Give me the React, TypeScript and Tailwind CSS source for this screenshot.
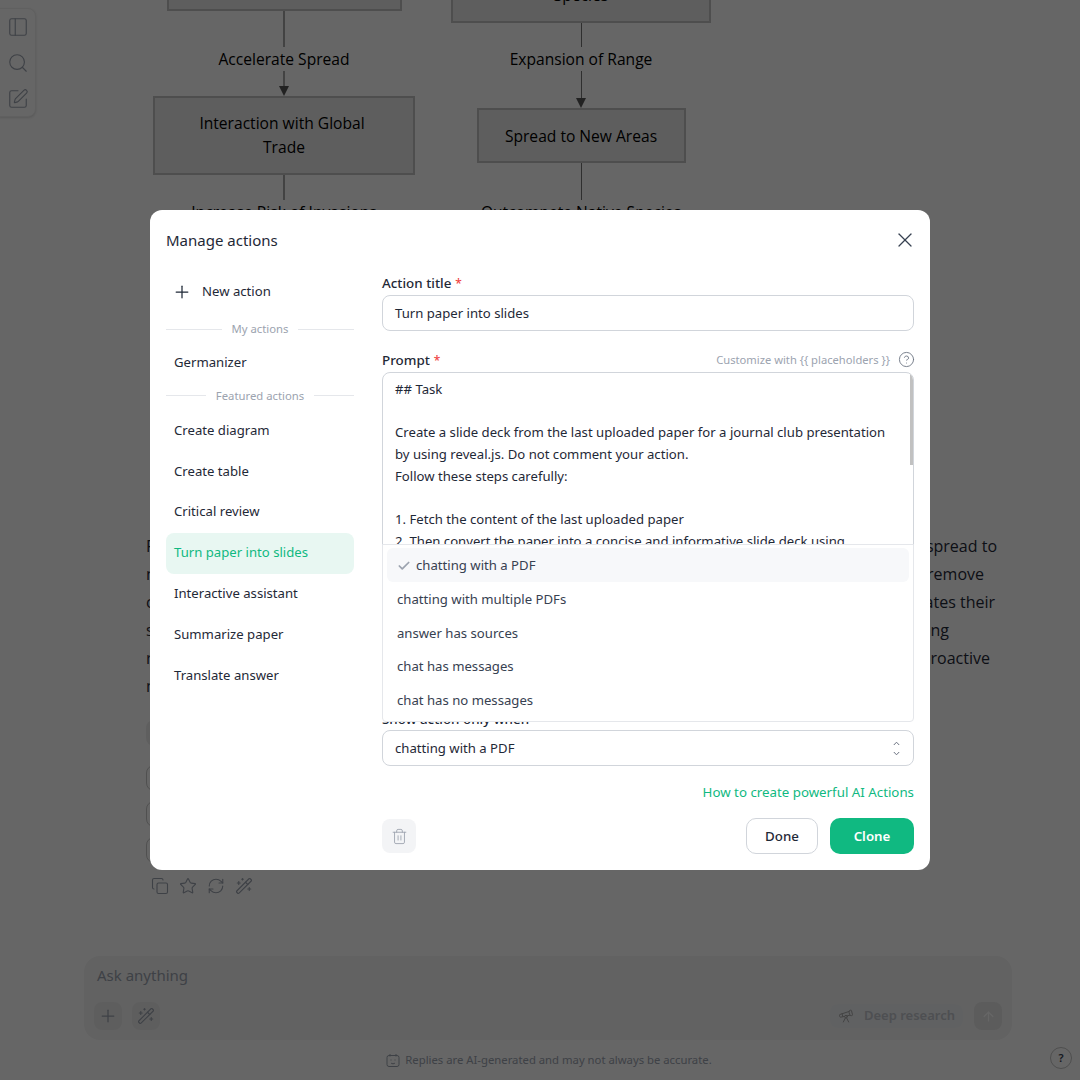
import { ArrowUp, Check, CircleHelp, Copy, PanelLeft, Plus, RefreshCw, Search, SquarePen, Star, Telescope, Trash2, WandSparkles, X } from "lucide-react";

const font = "[font-family:'Noto_Sans',sans-serif]";

function LeftLink({ h }: { h: string }) {
  return <div className={`w-[2px] bg-[#a8a8a8] ${h}`} />;
}

function RightLink({ h }: { h: string }) {
  return <div className={`w-px bg-[#777777] ${h}`} />;
}

function Arrow() {
  return <div className="h-0 w-0 border-x-[5px] border-t-[10px] border-x-transparent border-t-[#555]" />;
}

function DiagramLabel({ children }: { children: string }) {
  return <div className="flex h-[24px] items-center whitespace-nowrap text-[15.6px] leading-[24px] text-black">{children}</div>;
}

function Diagram() {
  return (
    <div className="flex h-[532px] items-start gap-[36px] overflow-hidden pl-[153px] [font-family:'Open_Sans',sans-serif]">
      <div className="flex w-[262px] flex-col items-center">
        <div className="h-[11px] w-[235px] border-x-2 border-b-2 border-[#c4c4c4] bg-[#ececec]" />
        <LeftLink h="h-[36px]" />
        <DiagramLabel>Accelerate Spread</DiagramLabel>
        <LeftLink h="h-[15px]" />
        <Arrow />
        <div className="flex h-[79px] w-[262px] flex-col items-center justify-center border-2 border-[#c4c4c4] bg-[#ececec] pb-[2px] text-[15.6px] leading-[24px] text-black">
          <span className="mr-[4px]">Interaction with Global</span>
          <span>Trade</span>
        </div>
        <LeftLink h="h-[25px]" />
        <DiagramLabel>Increase Risk of Invasions</DiagramLabel>
      </div>
      <div className="flex w-[260px] flex-col items-center">
        <div className="flex h-[23px] w-[260px] items-end justify-center border-x-2 border-b-2 border-[#c4c4c4] bg-[#ececec] text-[15.6px] leading-[24px] text-black">
          <span className="mb-[14px]">Species</span>
        </div>
        <RightLink h="h-[24px]" />
        <DiagramLabel>Expansion of Range</DiagramLabel>
        <RightLink h="h-[27px]" />
        <Arrow />
        <div className="flex h-[55px] w-[209px] items-center justify-center border-2 border-[#c4c4c4] bg-[#ececec] text-[15.6px] leading-[24px] text-black">
          Spread to New Areas
        </div>
        <RightLink h="h-[37px]" />
        <DiagramLabel>Outcompete Native Species</DiagramLabel>
      </div>
    </div>
  );
}

const para: [string, string, string][] = [
  ["Preventing invasive species", "to stop the spread to", "mr-[83px]"],
  ["native habitats and", "efforts to remove", "mr-[96px]"],
  ["control and monitor", "that regulates their", "mr-[85px]"],
  ["spread across regions", "by sharing", "mr-[131px]"],
  ["restoration work and", "and more proactive", "mr-[90px]"],
  ["management strategies.", "", "mr-0"],
];

function Paragraph() {
  return (
    <div className="w-full pl-[146px] text-[16px] leading-[28px] text-[#1f2937] [font-family:'Open_Sans',sans-serif]">
      {para.map(([l, r, m]) => (
        <div key={l} className="flex h-[28px] justify-between">
          <span>{l}</span>
          <span className={m}>{r}</span>
        </div>
      ))}
    </div>
  );
}

function Chips() {
  return (
    <div className="flex flex-col items-start pl-[146px] pt-[20px] text-[14px]">
      <div className="h-[26px] w-[200px] rounded-[8px] bg-[#eeeeee]" />
      <div className="mt-[19px] h-[26px] w-[200px] rounded-[8px] border border-[#c9c9c9]" />
      <div className="mt-[10px] h-[26px] w-[200px] rounded-[8px] border border-[#c9c9c9]" />
      <div className="mt-[10px] h-[26px] w-[200px] rounded-[8px] border border-[#c9c9c9]" />
    </div>
  );
}

function ActionIcons() {
  return (
    <div className="mt-[14px] flex gap-[10px] pl-[151px] text-[#9ca3af]">
      <Copy size={18} strokeWidth={1.5} />
      <Star size={18} strokeWidth={1.5} />
      <RefreshCw size={18} strokeWidth={1.5} />
      <WandSparkles size={18} strokeWidth={1.5} />
    </div>
  );
}

function Composer() {
  return (
    <div className="ml-[84px] mr-[68px] mt-[61px] flex h-[84px] flex-col rounded-[16px] bg-[#f5f5f5] p-[10px] pt-[8px]">
      <div className="pl-[3px] text-[15px] leading-[22px] text-[#9ca3af]">Ask anything</div>
      <div className="mt-auto flex items-center">
        <button className="flex h-[28px] w-[28px] items-center justify-center rounded-[8px] bg-[#ececec] text-[#9ca3af]">
          <Plus size={20} strokeWidth={1.5} />
        </button>
        <button className="ml-[10px] flex h-[28px] w-[28px] items-center justify-center rounded-[8px] bg-[#ececec] text-[#9ca3af]">
          <WandSparkles size={18} strokeWidth={1.5} />
        </button>
        <div className="ml-auto flex h-[24px] items-center gap-[10px] rounded-[8px] bg-[#f1f3f6] px-[8px] text-[#c2c6cc]">
          <Telescope size={16} strokeWidth={1.5} className="text-[#a8a8a8]" />
          <span className="text-[13px] font-semibold">Deep research</span>
        </div>
        <button className="ml-[11px] flex h-[28px] w-[28px] items-center justify-center rounded-[8px] bg-[#e6e6e6] text-white">
          <ArrowUp size={15} strokeWidth={2} />
        </button>
      </div>
    </div>
  );
}

function Footer() {
  return (
    <div className="relative mt-[11px] flex h-[18px] items-center justify-center gap-[5px] pl-[18px] text-[11.3px] text-[#9ca3af]">
      <svg width="14" height="15" viewBox="0 0 14 15" fill="none" stroke="currentColor" strokeWidth="1">
        <rect x="1" y="2.5" width="12" height="11" rx="2" />
        <path d="M4 1v2.5M10 1v2.5" />
        <path d="M5 6.5v1M9 6.5v1" />
        <path d="M5 10c.8 1 3.2 1 4 0" />
      </svg>
      <span>Replies are AI-generated and may not always be accurate.</span>
      <div className="absolute right-[8px] top-[-4px] flex h-[22px] w-[22px] items-center justify-center rounded-full border border-[#c4c4c4] text-[11px] font-semibold text-[#374151]">?</div>
    </div>
  );
}

function Rail() {
  return (
    <div className="absolute left-[-1px] top-[8px] flex h-[109px] w-[37px] flex-col items-center gap-[14px] rounded-r-[8px] border border-[#f0f0f0] bg-white pt-[7px] text-[#9ca3af] shadow-sm">
      <PanelLeft size={22} strokeWidth={1.25} />
      <Search size={22} strokeWidth={1.25} />
      <SquarePen size={22} strokeWidth={1.25} />
    </div>
  );
}

function Divider({ label, className }: { label: string; className: string }) {
  return (
    <div className={`flex items-center gap-[10px] text-[11.3px] leading-[16px] text-[#9ca3af] ${className}`}>
      <div className="h-px flex-1 bg-[#e5e7eb]" />
      <span>{label}</span>
      <div className="h-px flex-1 bg-[#e5e7eb]" />
    </div>
  );
}

function NavItem({ label, active }: { label: string; active?: boolean }) {
  return (
    <div className={`flex h-[40.85px] shrink-0 items-center rounded-[8px] px-[8px] text-[13.15px] ${active ? "bg-[#e8f7f2] text-[#10b981]" : "text-[#1f2937]"}`}>
      {label}
    </div>
  );
}

function Sidebar() {
  return (
    <div className="flex w-[188px] flex-col">
      <div className="flex h-[32px] items-center gap-[10px] pl-[6px] pt-[4px] text-[13.15px] text-[#1f2937]">
        <Plus size={20} strokeWidth={1.5} />
        <span>New action</span>
      </div>
      <Divider label="My actions" className="mt-[15px]" />
      <div className="mt-[5px]"><NavItem label="Germanizer" /></div>
      <Divider label="Featured actions" className="mt-[5px]" />
      <div className="mt-[6.4px] flex flex-col">
        <NavItem label="Create diagram" />
        <NavItem label="Create table" />
        <NavItem label="Critical review" />
        <NavItem label="Turn paper into slides" active />
        <NavItem label="Interactive assistant" />
        <NavItem label="Summarize paper" />
        <NavItem label="Translate answer" />
      </div>
    </div>
  );
}

function FieldLabel({ text, required }: { text: string; required?: boolean }) {
  return (
    <span className="text-[13.4px] font-medium leading-[20px] text-[#1f2937]">
      {text}
      {required && <span className="ml-[4px] text-[12px] text-[#ef4444]">*</span>}
    </span>
  );
}

const promptLines = [
  "## Task",
  "\u00a0",
  "Create a slide deck from the last uploaded paper for a journal club presentation",
  "by using reveal.js. Do not comment your action.",
  "Follow these steps carefully:",
  "\u00a0",
  "1. Fetch the content of the last uploaded paper",
  "2. Then convert the paper into a concise and informative slide deck using",
];

const options = ["chatting with multiple PDFs", "answer has sources", "chat has messages", "chat has no messages"];

function Form() {
  return (
    <div className="relative flex w-[532px] flex-col">
      <div className="flex h-[20px] items-center"><FieldLabel text="Action title" required /></div>
      <div className="mt-[2px] flex h-[36px] items-center rounded-[8px] border border-[#d1d5db] px-[12px] pt-[2px] text-[13.15px] text-[#1f2937]">Turn paper into slides</div>
      <div className="mt-[19px] flex h-[20px] items-center justify-between">
        <FieldLabel text="Prompt" required />
        <div className="flex items-center gap-[8px] text-[11.2px] text-[#9ca3af]">
          <span>Customize with {"{{ placeholders }}"}</span>
          <CircleHelp size={17} strokeWidth={1.25} className="-mr-[1px] mb-[1px] text-[#6b7280]" />
        </div>
      </div>
      <div className="relative mt-[2px] h-[326px] overflow-hidden rounded-[8px] border border-[#d1d5db] px-[12px] pt-[6px] text-[13.15px] leading-[21.7px] text-[#1f2937]">
        {promptLines.map((l, i) => <div key={i} className="whitespace-nowrap">{l}</div>)}
        <div className="absolute right-0 top-0 h-[92px] w-[3px] bg-[#c1c1c1]" />
      </div>
      <div className="mt-[11px] flex h-[20px] items-center"><FieldLabel text="Show action only when" /></div>
      <div className="mt-[1px] flex h-[36px] items-center justify-between rounded-[8px] border border-[#d1d5db] pl-[12px] pr-[13px] text-[13.15px] text-[#1f2937]">
        <span className="pt-[2px]">chatting with a PDF</span>
        <svg width="7" height="15" viewBox="0 0 7 15" fill="none" stroke="#6b7280" strokeWidth="1">
          <path d="M.8 4 3.5 1.2 6.2 4M.8 11 3.5 13.8 6.2 11" />
        </svg>
      </div>
      <div className="mt-[16px] text-right text-[13.3px] leading-[20px] text-[#10b981]">How to create powerful AI Actions</div>
      <div className="mt-[16px] flex items-center">
        <button className="flex h-[34px] w-[34px] items-center justify-center rounded-[8px] bg-[#f3f4f6] text-[#9ca3af]">
          <Trash2 size={17} strokeWidth={1.25} />
        </button>
        <button className="ml-auto flex h-[36px] w-[72px] items-center justify-center rounded-[10px] border border-[#d1d5db] pt-[2px] text-[13.3px] font-medium text-[#1f2937]">Done</button>
        <button className="ml-[12px] flex h-[36px] w-[84px] items-center justify-center rounded-[10px] bg-[#10b981] pt-[2px] text-[13.3px] font-semibold text-white">Clone</button>
      </div>
      <div className="absolute left-0 right-0 top-[271px] h-[178px] rounded-b-[4px] border border-[#e5e7eb] bg-white px-[4px] pt-[3px] text-[13.15px] text-[#374151]">
        <div className="flex h-[34px] items-center gap-[5px] rounded-[6px] bg-[#f7f8fa] pl-[10px] pt-[2px]">
          <Check size={14} strokeWidth={3} className="text-[#9ca3af]" />
          <span>chatting with a PDF</span>
        </div>
        {options.map((o) => (
          <div key={o} className="flex h-[33.6px] items-center pl-[10px] pt-[2px]">{o}</div>
        ))}
      </div>
    </div>
  );
}

function Modal() {
  return (
    <div className="absolute left-[150px] top-[210px] h-[660px] w-[780px] rounded-[12px] bg-white px-[16px] pt-[15px]">
      <div className="flex h-[30px] items-center justify-between">
        <span className="text-[15px] text-[#1f2937]">Manage actions</span>
        <X size={24} strokeWidth={1.25} className="-mr-[3px] text-[#374151]" />
      </div>
      <div className="mt-[18px] flex gap-[28px]">
        <div className="pt-[1px]"><Sidebar /></div>
        <Form />
      </div>
    </div>
  );
}

export default function App() {
  return (
    <div className={`relative h-[1080px] w-[1080px] overflow-hidden bg-white ${font}`}>
      <Diagram />
      <Paragraph />
      <Chips />
      <ActionIcons />
      <Composer />
      <Footer />
      <Rail />
      <div className="absolute inset-0 bg-black/60" />
      <Modal />
    </div>
  );
}
